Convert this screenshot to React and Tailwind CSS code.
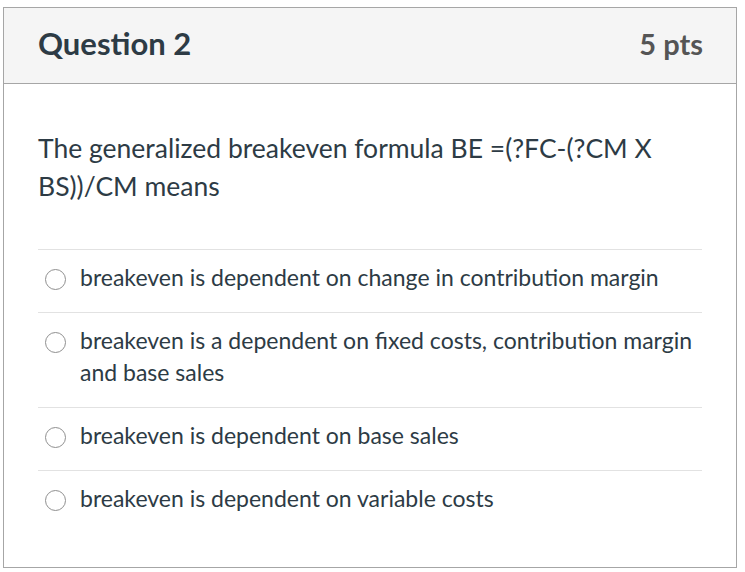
import React from "react";

const answers = [
  "breakeven is dependent on change in contribution margin",
  "breakeven is a dependent on fixed costs, contribution margin and base sales",
  "breakeven is dependent on base sales",
  "breakeven is dependent on variable costs",
];

export default function App() {
  return (
    <div
      className="w-[745px] h-[572px] bg-white pt-[7px] pl-[3px]"
      style={{ fontFamily: "Lato, 'Open Sans', sans-serif" }}
    >
      <div className="w-[734px] h-[561px] border border-[#a6a6a6] flex flex-col">
        <div className="h-[76px] bg-[#f5f5f5] border-b border-[#a6a6a6] flex items-center justify-between pl-[34px] pr-[33px] pb-[4px]">
          <div className="text-[31px] font-bold text-[#2d3b45]">Question 2</div>
          <div className="text-[29px] font-bold text-[#555555]">5 pts</div>
        </div>
        <div className="px-[34px] pt-[45px]">
          <div className="text-[26.5px] leading-[38px] text-[#2d3b45]">
            The generalized breakeven formula BE =(?FC-(?CM X BS))/CM means
          </div>
          <div className="mt-[44px]">
            {answers.map((a, i) => (
              <div
                key={i}
                className="border-t border-[#e2e2e2] flex items-start pt-[11px] pb-[19px] pl-[7px]"
              >
                <div className="w-[21px] h-[21px] rounded-full border border-[#8f8f8f] mt-[8px] shrink-0 bg-white" />
                <div className="ml-[14px] text-[23px] leading-[32px] text-[#2d3b45]">{a}</div>
              </div>
            ))}
          </div>
        </div>
      </div>
    </div>
  );
}
